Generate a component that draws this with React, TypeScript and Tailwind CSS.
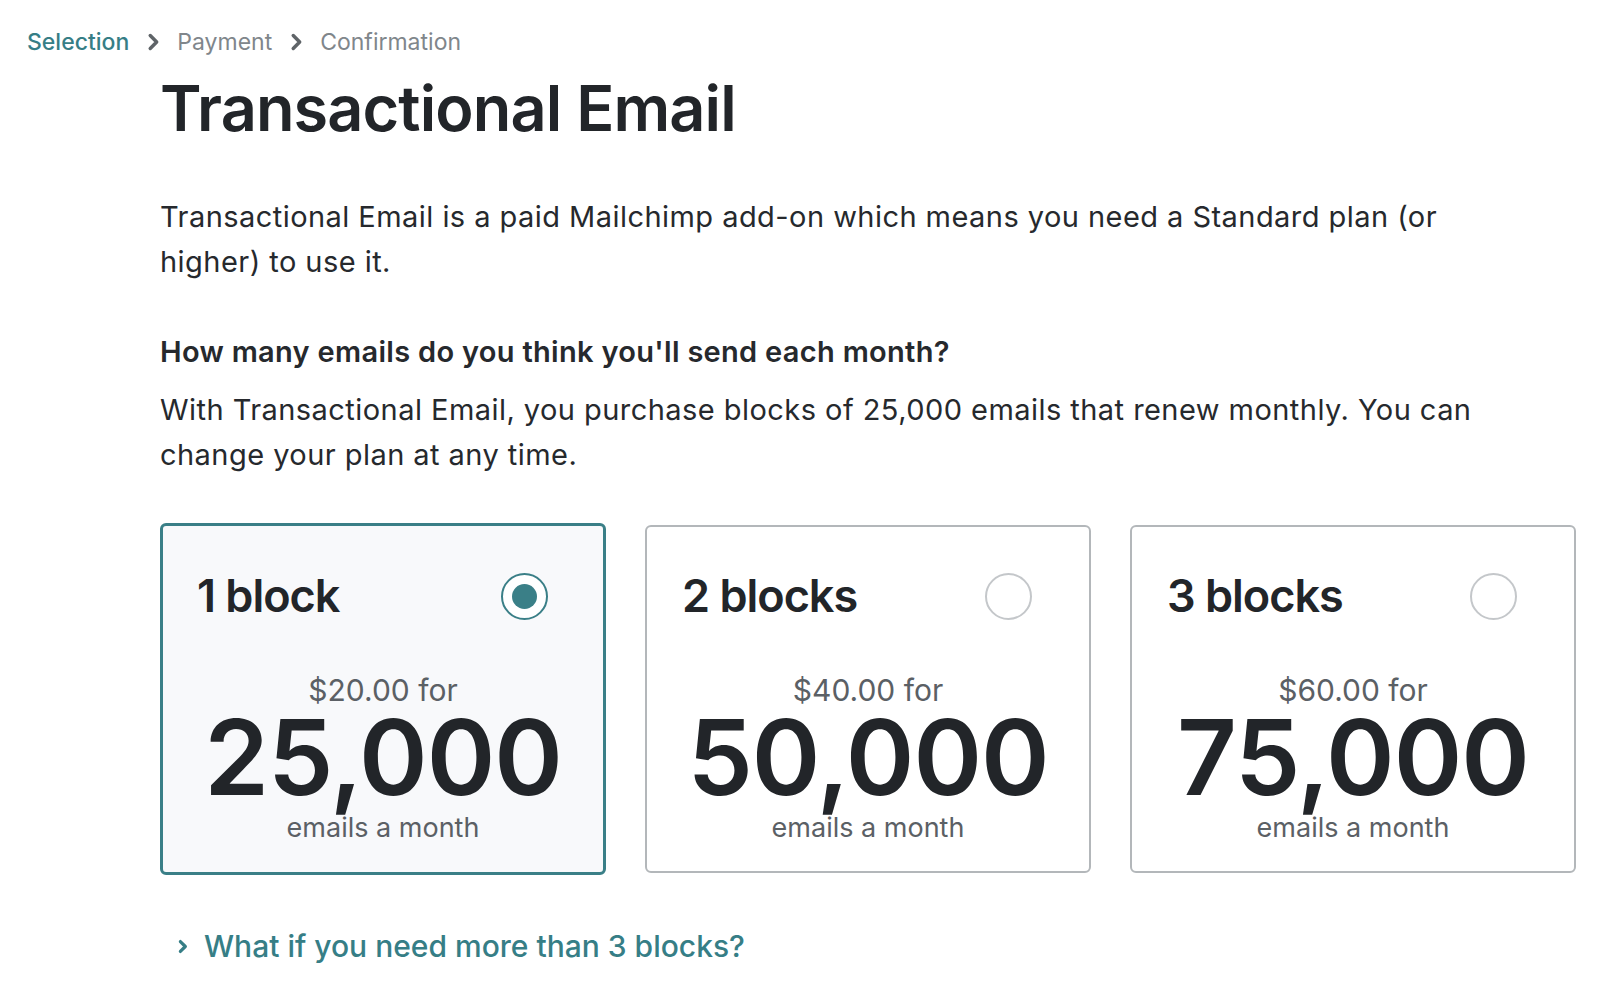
import React from "react";

const cards = [
  { title: "1 block", price: "$20.00", amount: "25,000", selected: true },
  { title: "2 blocks", price: "$40.00", amount: "50,000", selected: false },
  { title: "3 blocks", price: "$60.00", amount: "75,000", selected: false },
];

function Chevron({ className, sw = 3 }: { className?: string; sw?: number }) {
  return (
    <svg viewBox="0 0 24 24" className={className} fill="none" stroke="currentColor" strokeWidth={sw} strokeLinecap="round" strokeLinejoin="round">
      <path d="M9 5l7 7-7 7" />
    </svg>
  );
}

export default function App() {
  return (
    <div className="min-h-[1001px] w-[1600px] bg-white text-[#26292d]" style={{ fontFamily: "Inter, 'Noto Sans', sans-serif" }}>
      <nav className="flex items-center pl-[27px] pt-[27px] text-[23px] leading-[30px]">
        <span className="font-medium text-[#367e86]">Selection</span>
        <Chevron className="mx-[13px] h-[22px] w-[22px] text-[#5f6468]" sw={3.8} />
        <span className="text-[#80868b]">Payment</span>
        <Chevron className="mx-[13px] h-[22px] w-[22px] text-[#5f6468]" sw={3.8} />
        <span className="text-[#80868b]">Confirmation</span>
      </nav>
      <main className="ml-[160px] w-[1416px]">
        <h1 className="mt-[13px] text-[63px] font-semibold leading-[76px] tracking-[-0.9px] text-[#222529]">Transactional Email</h1>
        <p className="mt-[48px] max-w-[1360px] text-[29px] leading-[45px] tracking-[0.45px]">
          Transactional Email is a paid Mailchimp add-on which means you need a Standard plan (or higher) to use it.
        </p>
        <h2 className="mt-[45px] text-[29px] font-semibold leading-[45px] tracking-[0.3px]">How many emails do you think you'll send each month?</h2>
        <p className="mt-[13px] max-w-[1360px] text-[29px] leading-[45px] tracking-[0.45px]">
          With Transactional Email, you purchase blocks of 25,000 emails that renew monthly. You can change your plan at any time.
        </p>
        <div className="mt-[46px] grid grid-cols-3 gap-[39px]">
          {cards.map((c) => (
            <div
              key={c.title}
              className={
                c.selected
                  ? "h-[352px] rounded-[6px] border-[3px] border-[#3a7f87] bg-[#f8f9fb] px-[34px] pt-[42px]"
                  : "mt-[2px] h-[348px] rounded-[6px] border-2 border-[#b3b7ba] bg-white px-[35px] pt-[41px]"
              }
            >
              <div className="flex items-center justify-between">
                <span className="text-[45px] font-semibold leading-[56px] tracking-[-1px] text-[#222529]">{c.title}</span>
                {c.selected ? (
                  <span className="mr-[21px] flex h-[47px] w-[47px] items-center justify-center rounded-full border-2 border-[#3a7f87] bg-white">
                    <span className="h-[25px] w-[25px] rounded-full bg-[#3a7f87]" />
                  </span>
                ) : (
                  <span className="mr-[22px] h-[47px] w-[47px] rounded-full border-2 border-[#c4c7ca] bg-white" />
                )}
              </div>
              <div className="mt-[46px] flex flex-col items-center">
                <span className="text-[30px] leading-[40px] text-[#5b6065]">{c.price} for</span>
                <span className="mt-[7px] text-[104px] font-semibold leading-[80px] tracking-[-1px] text-[#222529]">{c.amount}</span>
                <span className="mt-[13px] text-[27px] leading-[36px] text-[#5b6065]">emails a month</span>
              </div>
            </div>
          ))}
        </div>
        <div className="mt-[51px] flex items-center pl-[14px] text-[#367e86]">
          <Chevron className="h-[17px] w-[17px]" sw={4.5} />
          <span className="ml-[13px] text-[30px] font-medium leading-[40px]">What if you need more than 3 blocks?</span>
        </div>
      </main>
    </div>
  );
}
